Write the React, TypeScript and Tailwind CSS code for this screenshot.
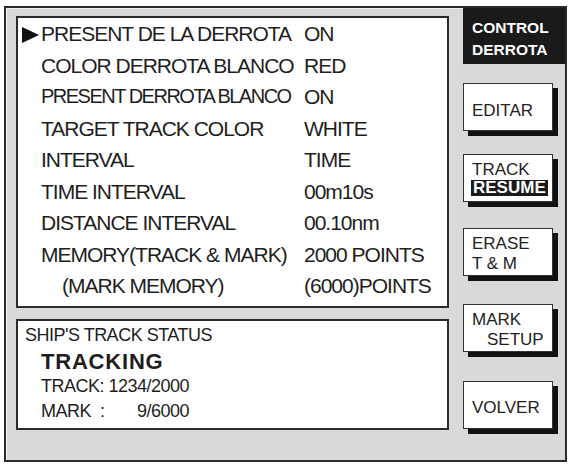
const rows = [
  { label: "PRESENT DE LA DERROTA", value: "ON", arrow: true },
  { label: "COLOR DERROTA BLANCO", value: "RED" },
  { label: "PRESENT DERROTA BLANCO", value: "ON", tight: true },
  { label: "TARGET TRACK COLOR", value: "WHITE" },
  { label: "INTERVAL", value: "TIME" },
  { label: "TIME INTERVAL", value: "00m10s" },
  { label: "DISTANCE INTERVAL", value: "00.10nm" },
  { label: "MEMORY(TRACK & MARK)", value: "2000 POINTS" },
  { label: "(MARK MEMORY)", value: "(6000)POINTS", indent: true },
];

const SoftKey = ({ className, children }: { className: string; children: React.ReactNode }) => (
  <div
    className={`w-[90px] h-[48px] bg-white border border-[#333] shadow-[5px_5px_0_#111] text-[17px] text-[#222] leading-[20px] pl-[8px] ${className}`}
  >
    {children}
  </div>
);

export default function App() {
  return (
    <div
      className="bg-white w-[570px] h-[464px] pt-[6px] pl-[4px]"
      style={{ fontFamily: '"Liberation Sans", Arial, sans-serif' }}
    >
      <div className="w-[563px] h-[456px] border-2 border-[#2b2b2b] bg-[#d9d9d9] flex shadow-[inset_1px_1px_0_#f2f2f2]">
        {/* left panels */}
        <div className="pl-[10px] pt-[8px] flex flex-col">
          <div className="w-[433px] h-[292px] bg-white border-2 border-[#2b2b2b] text-[21px] tracking-[-1px] text-[#1e1e1e] leading-[31.5px]">
            {rows.map((row) => (
              <div key={row.label} className="flex">
                <div className="w-[23px] flex items-center justify-end pr-[2px] pt-[3px]">
                  {row.arrow && (
                    <svg width="17" height="16" viewBox="0 0 17 16">
                      <polygon points="0,0 17,8 0,16" fill="#111" />
                    </svg>
                  )}
                </div>
                <div
                  className={`w-[263px] whitespace-nowrap ${row.indent ? "pl-[21px]" : ""} ${
                    row.tight ? "text-[20px] tracking-[-1.5px]" : ""
                  }`}
                >
                  {row.label}
                </div>
                <div className="whitespace-nowrap">{row.value}</div>
              </div>
            ))}
          </div>

          <div className="mt-[11px] w-[433px] h-[111px] bg-white border-2 border-[#2b2b2b] text-[#1e1e1e] pt-[2px]">
            <div className="pl-[7px] text-[18px] leading-[24px] tracking-[-0.5px]">SHIP'S TRACK STATUS</div>
            <div className="pl-[23px] mt-[2px] text-[22px] font-bold leading-[26px] tracking-[0.8px]">TRACKING</div>
            <div className="pl-[23px] text-[18px] leading-[22px] tracking-[-0.5px]">TRACK: 1234/2000</div>
            <div className="pl-[23px] mt-[3px] text-[18px] leading-[22px] tracking-[-0.5px] flex">
              <span className="w-[96px]">MARK&nbsp;&nbsp;:</span>
              <span>9/6000</span>
            </div>
          </div>
        </div>

        {/* right soft keys */}
        <div className="ml-[14px] flex flex-col">
          <div className="w-[102px] h-[56px] bg-[#1a1a1a] text-white font-bold text-[15.5px] leading-[22px] pl-[9px] pt-[9px]">
            <div>CONTROL</div>
            <div>DERROTA</div>
          </div>

          <SoftKey className="mt-[19px] flex items-center pt-[8px]">EDITAR</SoftKey>

          <SoftKey className="mt-[23px] pt-[6px]">
            <div className="leading-[17px]">TRACK</div>
            <div className="mt-[1px] inline-block bg-[#1a1a1a] text-white font-bold text-[17px] leading-[16px] px-[2px] -ml-[1px]">
              RESUME
            </div>
          </SoftKey>

          <SoftKey className="mt-[26px] pt-[5px]">
            <div>ERASE</div>
            <div>T &amp; M</div>
          </SoftKey>

          <SoftKey className="mt-[28px] pt-[5px]">
            <div>MARK</div>
            <div className="pl-[15px]">SETUP</div>
          </SoftKey>

          <SoftKey className="mt-[29px] flex items-center pt-[6px]">VOLVER</SoftKey>
        </div>
      </div>
    </div>
  );
}
